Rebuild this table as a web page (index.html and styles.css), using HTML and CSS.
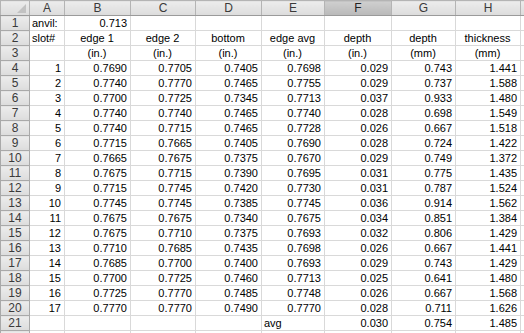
FILE: index.html
```html
<!DOCTYPE html>
<html lang="en">
<head>
    <meta charset="UTF-8">
    <title>slots</title>
    <link rel="stylesheet" href="styles.css">
</head>
<body>
    <!-- Sheet grid -->
    <table class="sheet">
        <colgroup>
            <col class="c-hdr"><col class="c-a"><col class="c-b"><col class="c-c"><col class="c-d">
            <col class="c-e"><col class="c-f"><col class="c-g"><col class="c-h"><col class="c-i">
        </colgroup>
        <thead>
            <tr class="col-heads">
                <th class="corner"><span class="corner-tri"></span></th>
                <th>A</th><th>B</th><th>C</th><th>D</th><th>E</th>
                <th class="selected">F</th><th>G</th><th>H</th><th class="cut"></th>
            </tr>
        </thead>
        <tbody>
            <tr><th>1</th><td class="txt">anvil:</td><td>0.713</td><td></td><td></td><td></td><td></td><td></td><td></td><td></td></tr>
            <tr><th>2</th><td class="txt">slot#</td><td class="mid">edge 1</td><td class="mid">edge 2</td><td class="mid">bottom</td><td class="mid">edge avg</td><td class="mid">depth</td><td class="mid">depth</td><td class="mid">thickness</td><td></td></tr>
            <tr><th>3</th><td></td><td class="mid">(in.)</td><td class="mid">(in.)</td><td class="mid">(in.)</td><td class="mid">(in.)</td><td class="mid">(in.)</td><td class="mid">(mm)</td><td class="mid">(mm)</td><td></td></tr>
            <tr><th>4</th><td>1</td><td>0.7690</td><td>0.7705</td><td>0.7405</td><td>0.7698</td><td>0.029</td><td>0.743</td><td>1.441</td><td></td></tr>
            <tr><th>5</th><td>2</td><td>0.7740</td><td>0.7770</td><td>0.7465</td><td>0.7755</td><td>0.029</td><td>0.737</td><td>1.588</td><td></td></tr>
            <tr><th>6</th><td>3</td><td>0.7700</td><td>0.7725</td><td>0.7345</td><td>0.7713</td><td>0.037</td><td>0.933</td><td>1.480</td><td></td></tr>
            <tr><th>7</th><td>4</td><td>0.7740</td><td>0.7740</td><td>0.7465</td><td>0.7740</td><td>0.028</td><td>0.698</td><td>1.549</td><td></td></tr>
            <tr><th>8</th><td>5</td><td>0.7740</td><td>0.7715</td><td>0.7465</td><td>0.7728</td><td>0.026</td><td>0.667</td><td>1.518</td><td></td></tr>
            <tr><th>9</th><td>6</td><td>0.7715</td><td>0.7665</td><td>0.7405</td><td>0.7690</td><td>0.028</td><td>0.724</td><td>1.422</td><td></td></tr>
            <tr><th>10</th><td>7</td><td>0.7665</td><td>0.7675</td><td>0.7375</td><td>0.7670</td><td>0.029</td><td>0.749</td><td>1.372</td><td></td></tr>
            <tr><th>11</th><td>8</td><td>0.7675</td><td>0.7715</td><td>0.7390</td><td>0.7695</td><td>0.031</td><td>0.775</td><td>1.435</td><td></td></tr>
            <tr><th>12</th><td>9</td><td>0.7715</td><td>0.7745</td><td>0.7420</td><td>0.7730</td><td>0.031</td><td>0.787</td><td>1.524</td><td></td></tr>
            <tr><th>13</th><td>10</td><td>0.7745</td><td>0.7745</td><td>0.7385</td><td>0.7745</td><td>0.036</td><td>0.914</td><td>1.562</td><td></td></tr>
            <tr><th>14</th><td>11</td><td>0.7675</td><td>0.7675</td><td>0.7340</td><td>0.7675</td><td>0.034</td><td>0.851</td><td>1.384</td><td></td></tr>
            <tr><th>15</th><td>12</td><td>0.7675</td><td>0.7710</td><td>0.7375</td><td>0.7693</td><td>0.032</td><td>0.806</td><td>1.429</td><td></td></tr>
            <tr><th>16</th><td>13</td><td>0.7710</td><td>0.7685</td><td>0.7435</td><td>0.7698</td><td>0.026</td><td>0.667</td><td>1.441</td><td></td></tr>
            <tr><th>17</th><td>14</td><td>0.7685</td><td>0.7700</td><td>0.7400</td><td>0.7693</td><td>0.029</td><td>0.743</td><td>1.429</td><td></td></tr>
            <tr><th>18</th><td>15</td><td>0.7700</td><td>0.7725</td><td>0.7460</td><td>0.7713</td><td>0.025</td><td>0.641</td><td>1.480</td><td></td></tr>
            <tr><th>19</th><td>16</td><td>0.7725</td><td>0.7770</td><td>0.7485</td><td>0.7748</td><td>0.026</td><td>0.667</td><td>1.568</td><td></td></tr>
            <tr><th>20</th><td>17</td><td>0.7770</td><td>0.7770</td><td>0.7490</td><td>0.7770</td><td>0.028</td><td>0.711</td><td>1.626</td><td></td></tr>
            <tr><th>21</th><td></td><td></td><td></td><td></td><td class="txt">avg</td><td>0.030</td><td>0.754</td><td>1.485</td><td></td></tr>
            <tr><th></th><td></td><td></td><td></td><td></td><td></td><td></td><td></td><td></td><td></td></tr>
        </tbody>
    </table>
</body>
</html>
```

FILE: styles.css
```css
/* Reset */
* {
    box-sizing: border-box;
    margin: 0;
    padding: 0;
}

body {
    background: #ffffff;
    overflow: hidden;
    font-family: "Liberation Sans", Arial, sans-serif;
}

/* Spreadsheet table */
.sheet {
    border-collapse: collapse;
    table-layout: fixed;
    width: 544px;
    font-size: 11px;
    color: #000;
}

.c-hdr { width: 29px; }
.c-a { width: 35px; }
.c-b { width: 66px; }
.c-c { width: 65px; }
.c-d { width: 66px; }
.c-e { width: 63px; }
.c-f { width: 67px; }
.c-g { width: 64px; }
.c-h { width: 65px; }
.c-i { width: 24px; }

.sheet tr {
    height: 15px;
}

.sheet td {
    border: 1px solid #d9d9d9;
    padding: 0 3px 0 2px;
    text-align: right;
    white-space: nowrap;
    overflow: hidden;
    line-height: 13px;
}

.sheet td.txt {
    text-align: left;
}

.sheet td.mid {
    text-align: center;
}

/* Column and row headings */
.sheet th {
    font-weight: normal;
    font-size: 12px;
    color: #3a3a3a;
    border: 1px solid #a9a9a9;
    background: linear-gradient(#ececec, #dcdcdc);
    text-align: center;
    line-height: 13px;
    padding: 0;
}

.col-heads {
    height: 14px;
}

.col-heads th {
    border-color: #b4b4b4;
    border-bottom-color: #9a9a9a;
}

.col-heads th.selected {
    background: linear-gradient(#cfcfcf, #b9b9b9);
    color: #222;
}

tbody th {
    background: linear-gradient(90deg, #e9e9e9, #dedede);
    border-right-color: #9a9a9a;
}

/* Select-all corner */
.corner {
    position: relative;
}

.corner-tri {
    position: absolute;
    right: 3px;
    bottom: 2px;
    width: 0;
    height: 0;
    border-left: 9px solid transparent;
    border-bottom: 9px solid #c2c2c2;
}
```
